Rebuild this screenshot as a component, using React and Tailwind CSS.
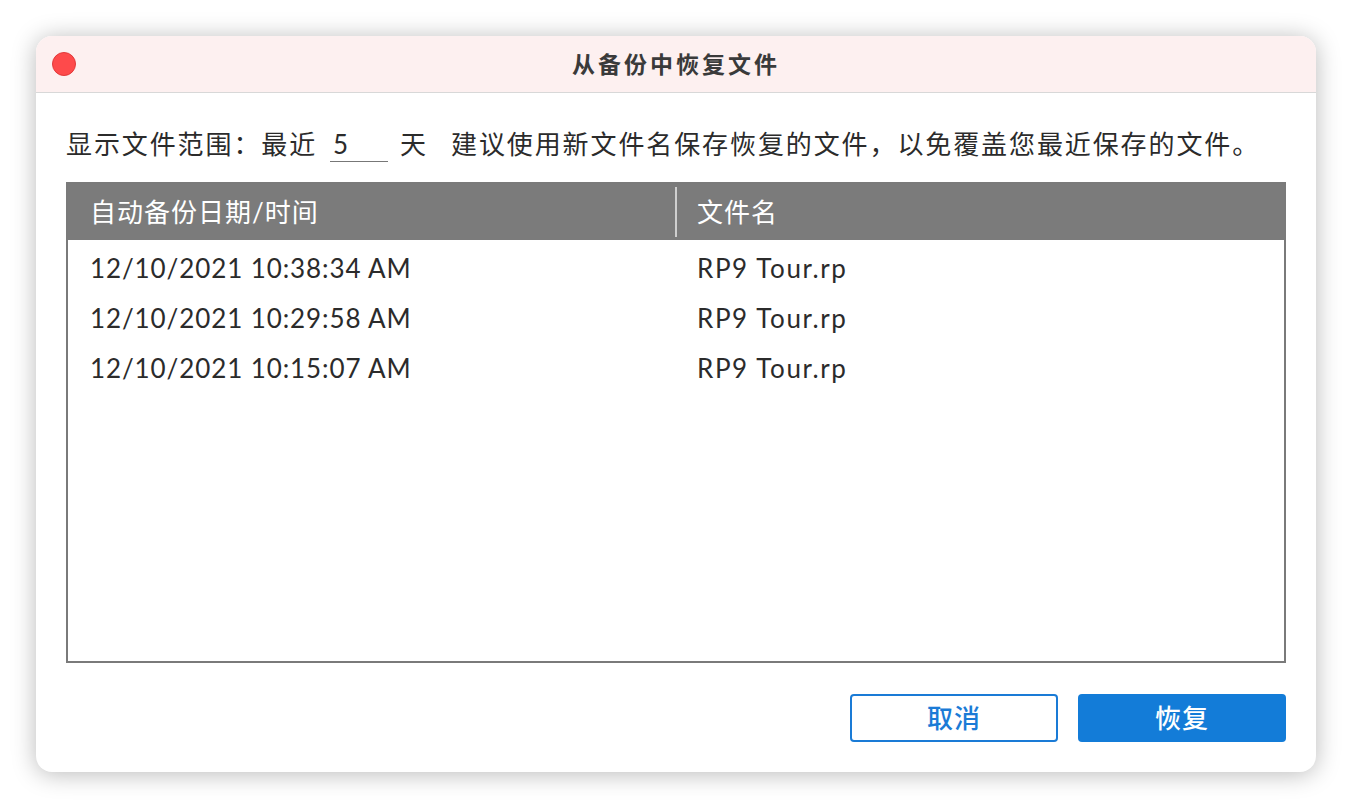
export default function App() {
  const rows = [
    ["12/10/2021 10:38:34 AM", "RP9 Tour.rp"],
    ["12/10/2021 10:29:58 AM", "RP9 Tour.rp"],
    ["12/10/2021 10:15:07 AM", "RP9 Tour.rp"],
  ];
  const font = { fontFamily: 'Lato, "Noto Sans CJK SC", sans-serif' };
  return (
    <div className="w-[1352px] h-[808px] bg-white pt-[36px] pl-[36px]" style={font}>
      <div className="w-[1280px] h-[736px] rounded-[16px] bg-white shadow-[0_2px_24px_rgba(0,0,0,0.28)] overflow-hidden flex flex-col">
        <div className="relative h-[57px] shrink-0 bg-[#fdf0f0] border-b border-[#d8d8d8] flex items-center justify-center">
          <div className="absolute left-[16px] top-[16px] w-[24px] h-[24px] rounded-full bg-[#fe4a4b] border border-[#e03a3b]" />
          <span className="text-[23px] font-bold text-[#3a3a3a] tracking-[3px]">从备份中恢复文件</span>
        </div>
        <div className="flex-1 flex flex-col px-[30px] pb-[30px]">
          <div className="h-[40px] mt-[31px] flex items-center text-[26px] text-[#2b2b2b] tracking-[1.9px] leading-none">
            <span>显示文件范围：最近</span>
            <span className="ml-[13px] w-[58px] h-[36px] border-b border-[#777] flex items-center pl-[3px] tracking-normal">5</span>
            <span className="ml-[12px]">天</span>
            <span className="ml-[23px]">建议使用新文件名保存恢复的文件，以免覆盖您最近保存的文件。</span>
          </div>
          <div className="mt-[18px] h-[481px] border-2 border-[#7a7a7a] flex flex-col">
            <div className="h-[56px] shrink-0 bg-[#7b7b7b] flex items-center text-white text-[26px] tracking-[1px]">
              <div className="w-[607px] pl-[22px] h-full flex items-center">自动备份日期/时间</div>
              <div className="w-[2px] h-[50px] bg-[#cfcfcf]" />
              <div className="pl-[20px]">文件名</div>
            </div>
            <div className="pt-[3px] flex flex-col">
              {rows.map((r, i) => (
                <div key={i} className="h-[50px] flex items-center text-[26px] text-[#2b2b2b]">
                  <div className="w-[609px] pl-[22px] tracking-[0.9px]">{r[0]}</div>
                  <div className="pl-[20px] tracking-[1.6px]">{r[1]}</div>
                </div>
              ))}
            </div>
          </div>
          <div className="mt-[31px] flex justify-end gap-[20px]">
            <button className="w-[208px] h-[48px] rounded-[4px] border-2 border-[#1a7bd6] text-[#1a7bd6] text-[26px] font-medium bg-white tracking-[1px]">取消</button>
            <button className="w-[208px] h-[48px] rounded-[4px] bg-[#137cd8] text-white text-[26px] font-medium tracking-[1px]">恢复</button>
          </div>
        </div>
      </div>
    </div>
  );
}
